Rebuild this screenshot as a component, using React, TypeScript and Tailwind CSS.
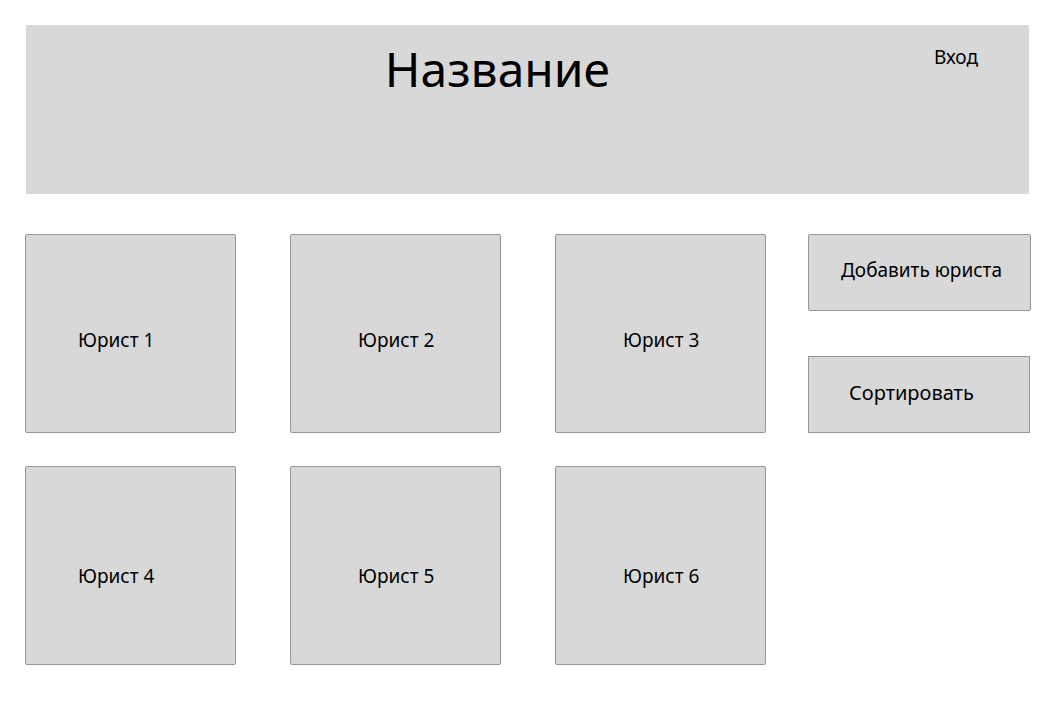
const firstRow = ['Юрист 1', 'Юрист 2', 'Юрист 3'];
const secondRow = ['Юрист 4', 'Юрист 5', 'Юрист 6'];

function LawyerRow({ names, className }: { names: string[]; className: string }) {
  return (
    <ul className="grid grid-cols-3 gap-x-[54px]">
      {names.map((name, column) => (
        <li
          key={name}
          className={`min-h-[199px] rounded-xs border border-[#979797] bg-[#d8d8d8] ${
            column === 0 ? 'pl-[52px]' : 'pl-[67px]'
          } ${className}`}
        >
          {name}
        </li>
      ))}
    </ul>
  );
}

export default function App() {
  return (
    <div className="min-h-screen bg-white pt-[25px] pr-4 pb-[52px] pl-[25px] font-['Noto_Sans',sans-serif] text-[19px] leading-6 text-black">
      <header className="mr-0.5 ml-px flex min-h-[169px] items-start bg-[#d8d8d8] pr-[51px] pl-[35px]">
        <h1 className="flex-1 pt-3.5 text-center text-[48px] leading-[60px]">Название</h1>
        <a href="#login" className="pt-5">
          Вход
        </a>
      </header>

      <div className="mt-10 flex items-start gap-[42px]">
        <main className="flex flex-1 flex-col gap-[33px]">
          <LawyerRow names={firstRow} className="pt-[93px]" />
          <LawyerRow names={secondRow} className="pt-[97px]" />
        </main>

        <aside className="flex w-[223px] flex-col gap-[45px]">
          <button
            type="button"
            className="h-[77px] rounded-xs border border-[#979797] bg-[#d8d8d8] pb-1.5 pl-8 text-left whitespace-nowrap"
          >
            Добавить юриста
          </button>
          <button
            type="button"
            className="mr-px h-[77px] border border-[#979797] bg-[#d8d8d8] pb-1 pl-10 text-left text-[20px] whitespace-nowrap"
          >
            Сортировать
          </button>
        </aside>
      </div>
    </div>
  );
}
